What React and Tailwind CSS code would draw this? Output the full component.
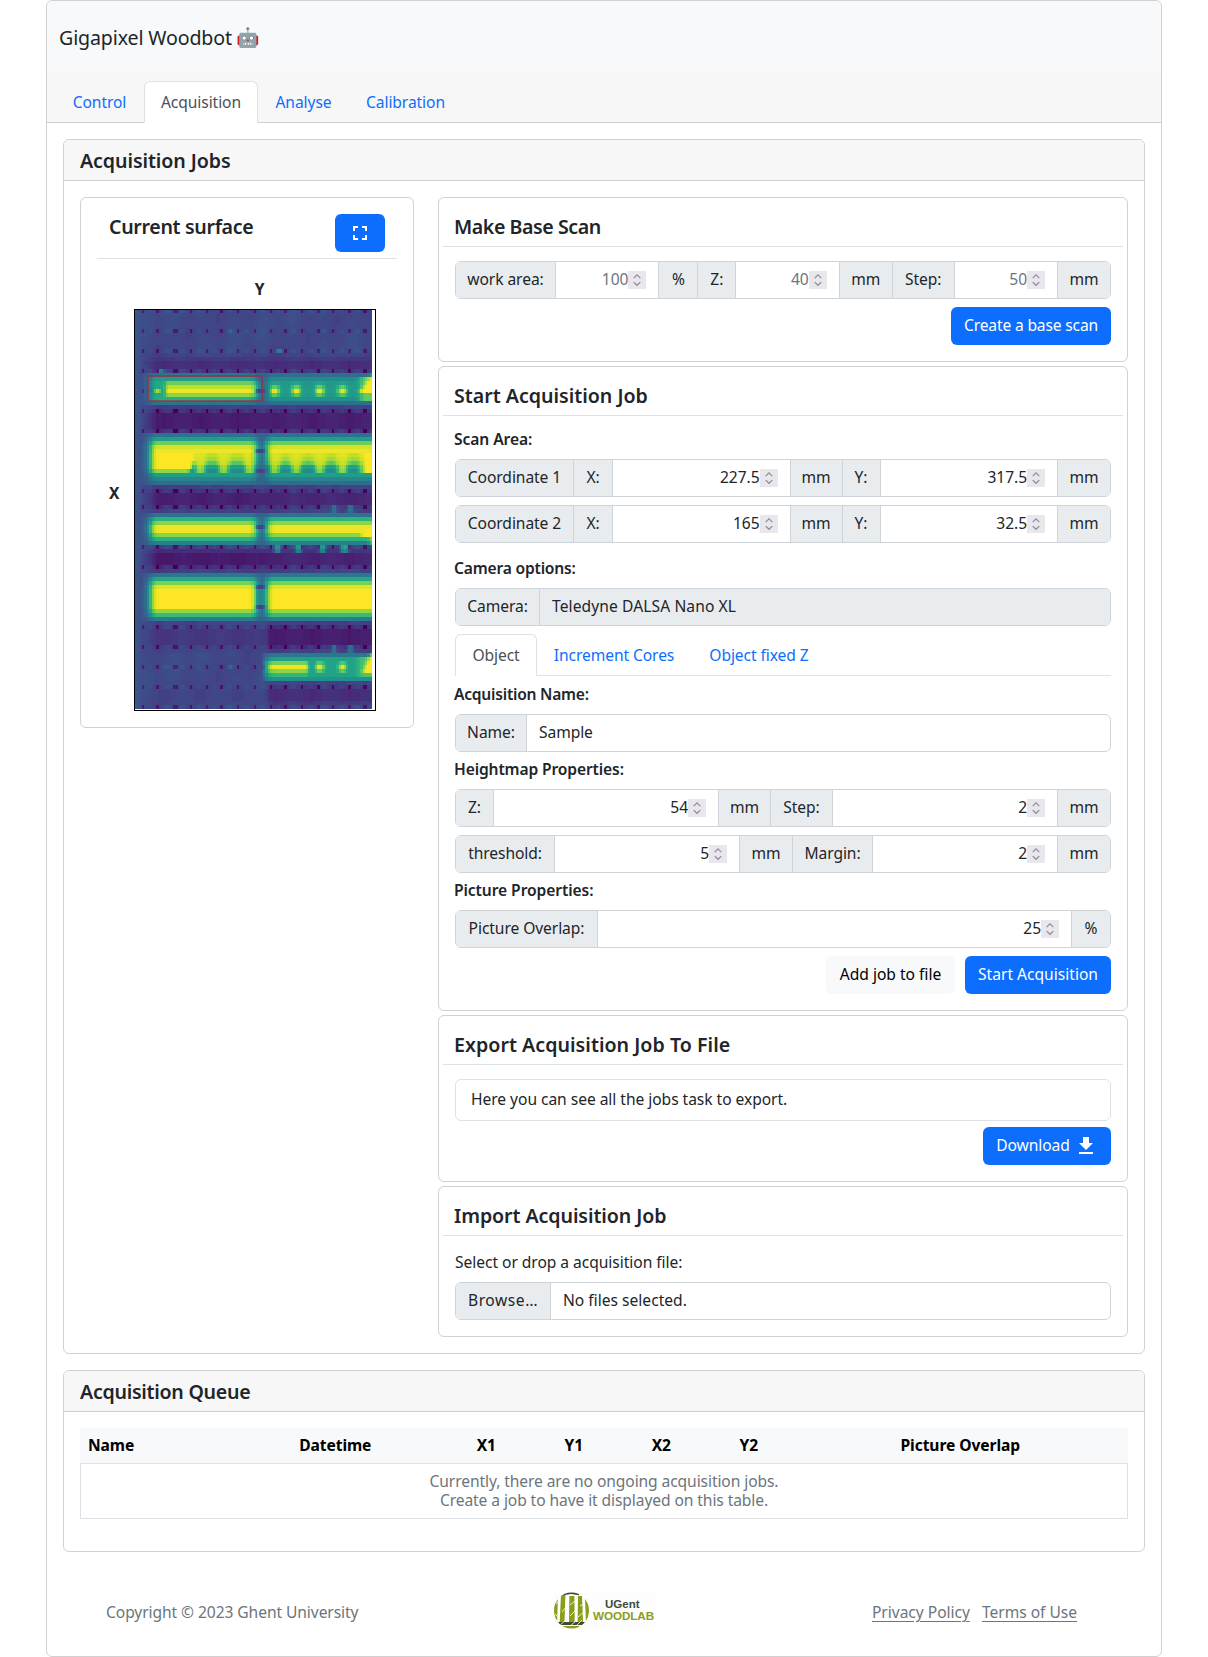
import React from "react";

/* ---------- surface heat map ---------- */

const VIRIDIS = [
  [68, 1, 84], [72, 36, 117], [65, 68, 135], [53, 95, 141], [42, 120, 142], [33, 145, 140],
  [34, 168, 132], [68, 191, 112], [122, 209, 81], [189, 223, 38], [253, 231, 37],
];

function viridis(v) {
  const t = Math.max(0, Math.min(0.9999, v)) * 10;
  const i = Math.floor(t);
  const f = t - i;
  const c = VIRIDIS[i].map((a, k) => Math.round(a + (VIRIDIS[i + 1][k] - a) * f));
  return `rgb(${c.join(",")})`;
}

const PINS = [3, 9, 16.5, 23, 30, 36, 43, 50, 57, 63, 70, 76.7, 83, 90, 96.5];
const PIN_ROWS = [0, 5, 10, 15, 20, 25, 30, 35, 40, 45, 49, 54, 59, 64, 69, 74, 79, 84, 89, 94, 99];

const BANDS = [
  { from: 16, rows: [0.37, 0.54, 0.78, 0.9, 0.98, 0.82, 0.62, 0.37] },
  { from: 31, rows: [0.38, 0.55, 0.78, 0.94, 0.98, 0.95, 0.94, 0.92, 0.88, 0.84, 0.55, 0.45, 0.35] },
  { from: 51, rows: [0.38, 0.64, 0.82, 0.97, 0.97, 0.82, 0.64, 0.44] },
  { from: 66, rows: [0.4, 0.6, 0.8, 0.95, 1, 1, 1, 1, 1, 0.84, 0.68, 0.43] },
  { from: 86, rows: [0.4, 0.56, 0.8, 0.98, 0.82, 0.66, 0.5] },
];

// first row, last row, depth on the left half, depth on the right half
const VALLEYS = [
  [11, 16, 0.13, 0.13],
  [24, 31, 0.08, 0.09],
  [44, 50, 0.09, 0.11],
  [59, 65, 0.07, 0.1],
  [78, 85, 0.16, 0.08],
  [93, 99, 0.2, 0.13],
];

const LEGS = [58.5, 67.5, 77.5, 87];
const LEFT_LEGS = [27, 37, 48];
const EDGE_GAIN = [0.08, 0.3, 0.55, 0.8, 0.93];

const clamp01 = (v) => Math.max(0, Math.min(1, v));
const mix = (a, b, k) => a + (b - a) * clamp01(k);
const distance = (c, list) => Math.min(...list.map((p) => Math.abs(c - p)));

function ground(r, c) {
  let v = 0.215 + 0.012 * Math.sin(c * 0.5) + 0.012 * Math.sin(r * 0.35 + c * 0.12);
  VALLEYS.forEach(([a, b, dl, dr]) => {
    if (r < a || r > b || c < 3) return;
    const depth = (c > 55 ? dr : dl) + 0.012 * Math.sin(c * 0.4);
    v = mix(v, depth, Math.min(1, Math.min(r - a + 0.5, b - r + 0.5) / 2.5) * Math.min(1, (c - 2) / 7));
  });
  if (c < 2) v = 0.26;
  if (PIN_ROWS.includes(r)) v += distance(c, PINS) <= 2 ? -0.01 : 0.04;
  return v;
}

function spots(r, c) {
  if (r === 5 && c === 40) return 0.42;
  if (r === 10 && (c === 60 || c === 61)) return 0.5;
  if (r === 15 && (c === 10 || c === 11)) return 0.48;
  if (r === 89 && c === 40) return 0.45;
  const bump = c === 83 || c === 84 || c === 90 || c === 91;
  if (bump && [49, 50, 84, 85].includes(r)) return 0.4;
  const leg = distance(c - 1, LEGS);
  if ((r === 59 || r === 60) && leg <= 1.2) return r === 59 ? 0.6 : 0.48;
  return 0;
}

function bandValue(b, i, r, c) {
  const left = c < 54;
  let v = BANDS[b].rows[i];
  if (b === 0 && !left) {
    v = [0.36, 0.48, 0.53, 0.54, 0.54, 0.53, 0.5, 0.36][i];
    const peak = [0, 0, 0.58, 0.78, 1, 0.76, 0, 0][i];
    if (peak) v = mix(peak, v, (distance(c, LEGS) - 0.6) / 2);
    if (i >= 1 && i <= 6) v = mix(v, 0.76, (c - 93) / 3);
    if (i <= 4) v = mix(v, 1, (c - 98.5 + i * 1.2) / 1.5);
  }
  if (b === 0 && left && i >= 2 && i <= 5) {
    if (c <= 12) v = Math.min(v, i === 4 ? [0.75, 0.95, 0.75][c - 8] || 0.56 : 0.6);
  }
  if (b === 1 && i >= 5 && i <= 9) {
    const gap = [0.9, 0.85, 0.73, 0.56, 0.48][i - 5];
    const solid = left && c < 25 - (i - 5) * 0.6;
    v = mix(v, gap, solid ? 0 : ((left ? distance(c, LEFT_LEGS) : distance(c, LEGS)) - 1) / (i > 7 ? 1.6 : 3));
    if (solid && i <= 8) v = 1;
    if (c > 92) v = mix(v, 1, (c - 93) / 4);
  }
  if (b === 2 && !left && i >= 3) v = mix(v, 1, (c - 98 + (i - 3) * (i < 6 ? 2 : 0)) / 2);
  if (b === 4) {
    if (c > 72 && i >= 1 && i <= 5) {
      v = 0.57;
      const peak = [0, 0, 0.76, 1, 0.78, 0][i];
      if (peak) v = mix(peak, v, (distance(c, [77.5, 87]) - 0.6) / 1.6);
      v = mix(v, 0.72, (c - 92) / 4);
    }
    if (i <= 4) v = mix(v, 1, (c - 98 + i * 0.8) / 1.5);
  }
  const edge = left ? Math.min(c - 6, 51 - c) : c - 55;
  const gain = edge >= 3 ? 1 : EDGE_GAIN[Math.max(0, edge + 2)];
  v = mix(0.26, v, gain);
  if (c >= 51 && c <= 54) {
    if (PIN_ROWS.includes(r)) v = 0.2;
    else if (b === 3 && i > 2 && i < 9) v = 0.47;
    else v = Math.max(v, 0.32);
  }
  return v;
}

function raw(r, c) {
  const spot = spots(r, c);
  if (spot) return spot;
  const b = BANDS.findIndex((band) => r >= band.from && r < band.from + band.rows.length);
  if (b < 0 || c < 3 || (b === 4 && c < 54)) return ground(r, c);
  return bandValue(b, r - BANDS[b].from, r, c);
}

const SIZE = 100;
const clampCell = (n) => Math.max(0, Math.min(SIZE - 1, n));

function height(r, c) {
  const here = raw(r, c);
  const side = raw(r, clampCell(c - 1)) + raw(r, clampCell(c + 1));
  const pin = here < 0.3 && PIN_ROWS.includes(r) && distance(c, PINS) <= 0.55 ? 0.13 : 0;
  return here * 0.6 + side * 0.2 - pin;
}

function buildSurface() {
  const byColor = new Map();
  for (let r = 0; r < SIZE; r += 1) {
    const colors = Array.from({ length: SIZE }, (_, c) => viridis(Math.round(height(r, c) * 80) / 80));
    let c = 0;
    while (c < SIZE) {
      let n = 1;
      while (c + n < SIZE && colors[c + n] === colors[c]) n += 1;
      byColor.set(colors[c], `${byColor.get(colors[c]) || ""}M${c} ${r}h${n}v1h${-n}z`);
      c += n;
    }
  }
  return [...byColor.entries()];
}

const SURFACE = buildSurface();

function SurfaceMap() {
  return (
    <div className="relative h-[402px] w-[242px] border border-black bg-white">
      <svg className="block h-[399px] w-[237px]" viewBox="0 0.25 100 99.75" preserveAspectRatio="none" shapeRendering="crispEdges">
        {SURFACE.map(([color, d]) => (
          <path key={color} d={d} fill={color} />
        ))}
      </svg>
      <div className="absolute top-[65px] left-[12px] h-[27px] w-[116px] border-2 border-[#a82a35]/65" />
    </div>
  );
}

/* ---------- form pieces ---------- */

function Label({ className, children }) {
  return (
    <span className={`flex shrink-0 items-center justify-center border-l border-[#ced4da] bg-[#e9ecef] first:border-l-0 ${className}`}>
      {children}
    </span>
  );
}

function NumberField({ value, muted }) {
  return (
    <span className="flex min-w-0 flex-1 items-center justify-end border-l border-[#ced4da] pr-3">
      <span className={muted ? "text-[#6c757d]" : ""}>{value}</span>
      <span className="flex h-[18px] w-[18px] items-center justify-center bg-[#e9e7ec]">
        <svg className="h-[18px] w-[18px]" viewBox="0 0 18 18" fill="none" stroke="#8f8f9d" strokeWidth="1.3">
          <path d="M5.7 7.1 9 3.9l3.3 3.2M5.7 11.1 9 14.3l3.3-3.2" />
        </svg>
      </span>
    </span>
  );
}

function TextField({ className = "", children }) {
  return <span className={`flex flex-1 items-center border-l border-[#ced4da] px-3 ${className}`}>{children}</span>;
}

function Group({ className = "", children }) {
  return <div className={`flex h-[38px] overflow-hidden rounded-md border border-[#ced4da] ${className}`}>{children}</div>;
}

function Panel({ title, titleClass = "", className, children }) {
  return (
    <section className={`rounded-md border border-[#d0d1d2] px-1 ${className}`}>
      <h5 className={`flex h-[49px] items-center border-b border-[#dee2e6] px-[11px] pt-[10px] text-[19.6px] font-semibold ${titleClass}`}>{title}</h5>
      <div className="px-3">{children}</div>
    </section>
  );
}

function Button({ className, children }) {
  return <button className={`flex h-[38px] items-center justify-center rounded-md bg-[#0d6efd] text-white ${className}`}>{children}</button>;
}

function FieldTitle({ className = "", children }) {
  return <div className={`-ml-px h-6 leading-6 font-semibold ${className}`}>{children}</div>;
}

function WoodlabLogo() {
  return (
    <svg className="h-[38px] w-[102px]" viewBox="0 0 102 38">
      <defs>
        <clipPath id="disc">
          <ellipse cx="18.5" cy="18.5" rx="17.5" ry="18" />
        </clipPath>
      </defs>
      <rect width="102" height="38" fill="#fdfdfd" />
      <g clipPath="url(#disc)">
        <path d="M0 4h5l-1 29H0zM8 3h4.4l-1 30H6.5zM16.4 4h5l.3 29h-5.8zM25 4h4l1.2 29h-5.6zM32 7h4v25h-3z" fill="#8a9e1c" />
        <path d="M9 0h17v3.2L18 2 9 3.6z" fill="#3e4a33" />
        <path d="M4 30h28v3H4z" fill="#3e4a33" />
        <path d="M8 34h22v4H8z" fill="#8a9e1c" />
        <path d="m3 12 4-5m0 20-5-5m7-2 4-5m4 9 6-6m-6-5 5-4m3 16 7-6m-5-5 5-3M7 33l6-5m4 6 6-5m1 4 5-5" stroke="#fff" strokeWidth="0.8" fill="none" />
      </g>
      <text x="52" y="15.5" className="font-['Liberation_Sans'] text-[11.5px] font-bold" textLength="34.5" fill="#3f4a38">UGent</text>
      <text x="40" y="27.6" className="font-['Liberation_Sans'] text-[11.5px] font-bold" textLength="61" lengthAdjust="spacingAndGlyphs" fill="#8a9e1c">WOODLAB</text>
    </svg>
  );
}

const COLUMNS = ["Name", "Datetime", "X1", "Y1", "X2", "Y2", "Picture Overlap"];

export default function App() {
  return (
    <div className="mx-auto h-[1657px] w-[1116px] rounded-md border border-[#d0d1d2] bg-white font-['Noto_Sans',sans-serif] text-[15.6px] tracking-[-0.005em] text-[#212529]">
      <header className="flex h-[72px] items-center rounded-t-md bg-[#f8f9fa] px-3 pt-[2px] text-[19.6px] tracking-[-0.007em]">
        <span className="whitespace-pre">Gigapixel Woodbot </span>
        <span className="font-['Noto_Color_Emoji'] text-[19px]">🤖</span>
      </header>

      <nav className="flex h-[50px] items-end border-b border-[#cfcfcf] bg-[#f7f7f7] px-2 text-[#0d6efd]">
        <a className="flex h-[42px] w-[89px] items-center justify-center pt-[3px]">Control</a>
        <a className="-mb-px flex h-[42px] w-[114px] items-center justify-center rounded-t-md border border-b-0 border-[#dee2e6] bg-white pt-px text-[#495057]">Acquisition</a>
        <a className="flex h-[42px] w-[91px] items-center justify-center pt-[3px]">Analyse</a>
        <a className="flex h-[42px] w-[113px] items-center justify-center pt-[3px]">Calibration</a>
      </nav>

      <main className="px-4 pt-4">
        <section className="h-[1215px] rounded-md border border-[#d0d1d2]">
          <h5 className="flex h-[41px] items-center rounded-t-md border-b border-[#cfcfcf] bg-[#f7f7f7] px-4 pt-[2px] text-[19.6px] font-semibold">Acquisition Jobs</h5>
          <div className="flex items-start gap-6 p-4">
            <aside className="h-[531px] w-[334px] shrink-0 rounded-md border border-[#d0d1d2] px-4 pt-4">
              <div className="flex h-[45px] items-start justify-between border-b border-[#dee2e6] px-3">
                <h5 className="h-6 text-[19.6px] leading-[26px] font-semibold tracking-[-0.017em]">Current surface</h5>
                <Button className="w-[50px]">
                  <svg className="h-6 w-6" viewBox="0 0 24 24" fill="currentColor">
                    <path d="M7 14H5v5h5v-2H7v-3zm-2-4h2V7h3V5H5v5zm12 7h-3v2h5v-5h-2v3zM14 5v2h3v3h2V5h-5z" />
                  </svg>
                </Button>
              </div>
              <div className="mt-[18px] pl-[25px] text-center leading-6 font-bold">Y</div>
              <div className="mt-2 flex items-center">
                <span className="w-[37px] pb-[33px] pl-3 font-bold">X</span>
                <SurfaceMap />
              </div>
            </aside>

            <div className="flex flex-1 flex-col gap-1">
              <Panel title="Make Base Scan" titleClass="tracking-[-0.022em]" className="h-[165px]">
                <Group className="mt-[14px]">
                  <Label className="w-[99px]">work area:</Label>
                  <NumberField value="100" muted />
                  <Label className="w-[39px]">%</Label>
                  <Label className="w-[38px]">Z:</Label>
                  <NumberField value="40" muted />
                  <Label className="w-[53px]">mm</Label>
                  <Label className="w-[62px]">Step:</Label>
                  <NumberField value="50" muted />
                  <Label className="w-[53px]">mm</Label>
                </Group>
                <div className="mt-2 flex justify-end">
                  <Button className="w-[160px] tracking-[-0.01em]">Create a base scan</Button>
                </div>
              </Panel>

              <Panel title="Start Acquisition Job" titleClass="tracking-[0em]" className="h-[645px]">
                <FieldTitle className="mt-[11px]">Scan Area:</FieldTitle>
                <Group className="mt-2">
                  <Label className="w-[117px]">Coordinate 1</Label>
                  <Label className="w-[39px]">X:</Label>
                  <NumberField value="227.5" />
                  <Label className="w-[52px]">mm</Label>
                  <Label className="w-[38px]">Y:</Label>
                  <NumberField value="317.5" />
                  <Label className="w-[53px]">mm</Label>
                </Group>
                <Group className="mt-2">
                  <Label className="w-[117px]">Coordinate 2</Label>
                  <Label className="w-[39px]">X:</Label>
                  <NumberField value="165" />
                  <Label className="w-[52px]">mm</Label>
                  <Label className="w-[38px]">Y:</Label>
                  <NumberField value="32.5" />
                  <Label className="w-[53px]">mm</Label>
                </Group>
                <FieldTitle className="mt-[13px] tracking-[-0.012em]">Camera options:</FieldTitle>
                <Group className="mt-2">
                  <Label className="w-[83px]">Camera:</Label>
                  <TextField className="bg-[#e9ecef] tracking-[0.006em]">Teledyne DALSA Nano XL</TextField>
                </Group>
                <div className="mt-2 flex h-[42px] items-end border-b border-[#dee2e6] text-[#0d6efd]">
                  <a className="-mb-px flex h-[42px] w-[82px] items-center justify-center rounded-t-md border border-b-0 border-[#dee2e6] bg-white pt-px text-[#495057]">Object</a>
                  <a className="flex h-[42px] w-[154px] items-center justify-center pt-[3px]">Increment Cores</a>
                  <a className="flex h-[42px] w-[136px] items-center justify-center pt-[3px]">Object fixed Z</a>
                </div>
                <FieldTitle className="mt-[6px] tracking-[-0.015em]">Acquisition Name:</FieldTitle>
                <Group className="mt-2">
                  <Label className="w-[70px]">Name:</Label>
                  <TextField>Sample</TextField>
                </Group>
                <FieldTitle className="mt-[5px] tracking-[-0.008em]">Heightmap Properties:</FieldTitle>
                <Group className="mt-2">
                  <Label className="w-[37px]">Z:</Label>
                  <NumberField value="54" />
                  <Label className="w-[52px]">mm</Label>
                  <Label className="w-[62px]">Step:</Label>
                  <NumberField value="2" />
                  <Label className="w-[53px]">mm</Label>
                </Group>
                <Group className="mt-2">
                  <Label className="w-[98px]">threshold:</Label>
                  <NumberField value="5" />
                  <Label className="w-[53px]">mm</Label>
                  <Label className="w-[80px]">Margin:</Label>
                  <NumberField value="2" />
                  <Label className="w-[53px]">mm</Label>
                </Group>
                <FieldTitle className="mt-[5px]">Picture Properties:</FieldTitle>
                <Group className="mt-2">
                  <Label className="w-[141px]">Picture Overlap:</Label>
                  <NumberField value="25" />
                  <Label className="w-[39px]">%</Label>
                </Group>
                <div className="mt-2 flex justify-end gap-[10px]">
                  <button className="h-[38px] w-[129px] rounded-md bg-[#f8f9fa] tracking-[0em] text-black">Add job to file</button>
                  <Button className="w-[146px] tracking-[0em]">Start Acquisition</Button>
                </div>
              </Panel>

              <Panel title="Export Acquisition Job To File" titleClass="tracking-[0.002em]" className="h-[167px]">
                <div className="mt-[14px] flex h-[42px] items-center rounded-md border border-[#dee2e6] px-[15px] tracking-[-0.003em]">Here you can see all the jobs task to export.</div>
                <div className="mt-[6px] flex justify-end">
                  <Button className="w-[128px] gap-1">
                    <span>Download</span>
                    <svg className="h-6 w-6" viewBox="0 0 24 24" fill="currentColor">
                      <path d="M19 9h-4V3H9v6H5l7 7 7-7zM5 18v2h14v-2H5z" />
                    </svg>
                  </Button>
                </div>
              </Panel>

              <Panel title="Import Acquisition Job" className="h-[151px]">
                <div className="mt-[14px] mb-2 h-6 leading-6 tracking-[-0.003em]">Select or drop a acquisition file:</div>
                <Group>
                  <Label className="w-[94px] tracking-[0.035em]">Browse…</Label>
                  <TextField className="tracking-[0em]">No files selected.</TextField>
                </Group>
              </Panel>
            </div>
          </div>
        </section>

        <section className="mt-4 h-[182px] rounded-md border border-[#d0d1d2]">
          <h5 className="flex h-[41px] items-center rounded-t-md border-b border-[#cfcfcf] bg-[#f7f7f7] px-4 pt-[2px] text-[19.6px] font-semibold tracking-[-0.014em]">Acquisition Queue</h5>
          <div className="px-4 pt-4">
            <div className="grid h-[35px] grid-cols-[148px_214.5px_87.5px_87.5px_87.5px_87.5px_1fr] items-center bg-[#f8f9fa] text-center font-bold text-black">
              {COLUMNS.map((name) => (
                <span key={name} className="first:pl-2 first:text-left">{name}</span>
              ))}
            </div>
            <div className="flex h-14 flex-col justify-center border border-[#dee2e6] pb-px text-center leading-[19px] tracking-[-0.006em] text-[#6c757d]">
              <span>Currently, there are no ongoing acquisition jobs.</span>
              <span>Create a job to have it displayed on this table.</span>
            </div>
          </div>
        </section>
      </main>

      <footer className="mt-10 flex h-[38px] items-center text-[#6c757d]">
        <span className="w-[506px] pt-[3px] pl-[59px] tracking-[-0.005em]">Copyright © 2023 Ghent University</span>
        <WoodlabLogo />
        <span className="ml-auto flex gap-3 pt-[3px] pr-[84px] tracking-[-0.002em]">
          <a className="underline underline-offset-3">Privacy Policy</a>
          <a className="underline underline-offset-3">Terms of Use</a>
        </span>
      </footer>
    </div>
  );
}
